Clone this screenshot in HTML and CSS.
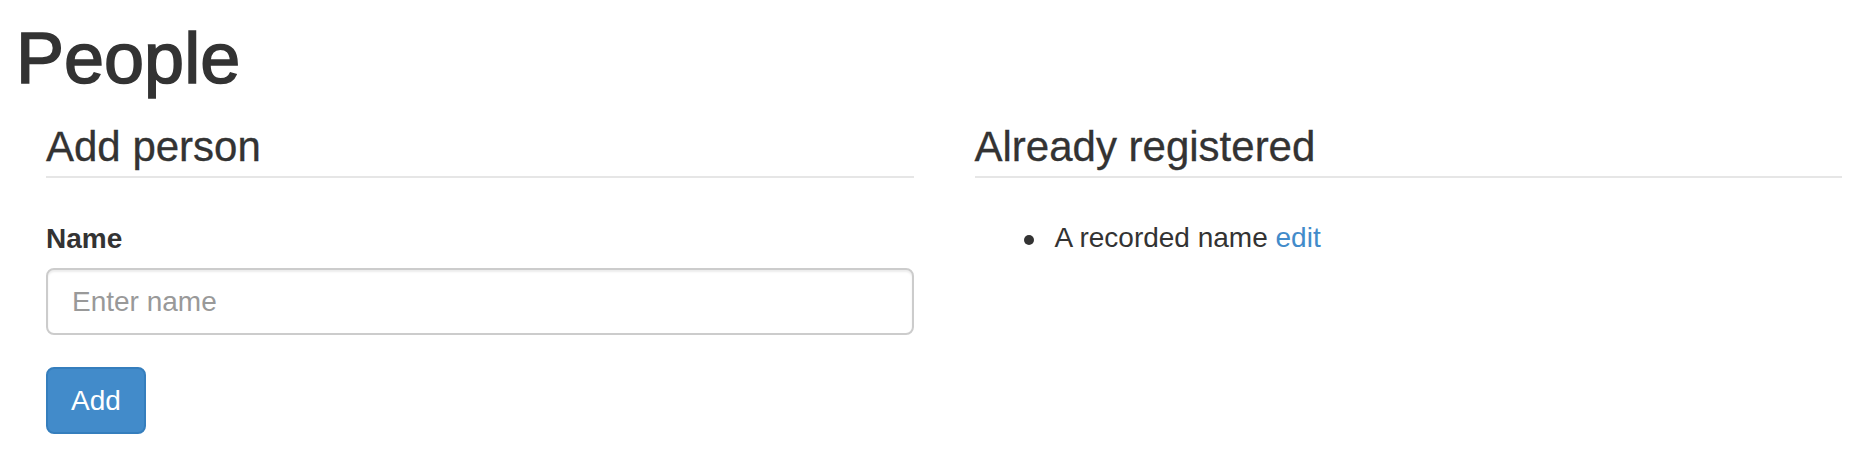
FILE: index.html
```html
<!DOCTYPE html>
<html lang="en">
<head>
<meta charset="utf-8">
<title>People</title>
<link rel="stylesheet" href="styles.css">
</head>
<body>
<div class="page">
  <h1 class="title">People</h1>
  <div class="row">
    <section class="col">
      <h3 class="section-header">Add person</h3>
      <form class="form">
        <div class="form-group">
          <label class="label" for="name">Name</label>
          <input class="input" id="name" type="text" placeholder="Enter name">
        </div>
        <button class="btn" type="button">Add</button>
      </form>
    </section>
    <section class="col">
      <h3 class="section-header">Already registered</h3>
      <ul class="list">
        <li class="list-item">A recorded name <a class="link" href="#">edit</a></li>
      </ul>
    </section>
  </div>
</div>
</body>
</html>
```
FILE: styles.css
```css
html, body {
  margin: 0;
  padding: 0;
  background: #ffffff;
}

body {
  font-family: "Liberation Sans", Arial, sans-serif;
  color: #333333;
  font-size: 28px;
  line-height: 40px;
}

.page {
  padding: 0 22px 0 16px;
}

.title {
  margin: 19px 0 0;
  font-size: 72px;
  line-height: 79px;
  font-weight: 500;
  color: #333333;
  -webkit-text-stroke: 1.6px #333333;
}

.row {
  display: grid;
  grid-template-columns: 1fr 1fr;
  column-gap: 61px;
  margin: 26px 0 0 30px;
}

.section-header {
  margin: 0;
  font-size: 42px;
  line-height: 46px;
  font-weight: 500;
  padding-bottom: 6px;
  border-bottom: 2px solid #e6e6e6;
  -webkit-text-stroke: 0.3px #333333;
}

.form {
  margin: 41px 0 0;
}

.form-group {
  margin-bottom: 32px;
}

.label {
  display: block;
  font-weight: bold;
  font-size: 28px;
  line-height: 40px;
  margin-bottom: 9px;
}

.input {
  display: block;
  box-sizing: border-box;
  width: 100%;
  height: 67px;
  padding: 0 24px;
  margin: 0;
  border: 2px solid #cccccc;
  border-radius: 8px;
  box-shadow: inset 0 2px 2px rgba(0, 0, 0, 0.075);
  font-family: "Liberation Sans", Arial, sans-serif;
  font-size: 28px;
  color: #555555;
  background: #ffffff;
  outline: none;
}

.input::placeholder {
  color: #999999;
}

.btn {
  display: inline-block;
  padding: 12px 23px;
  margin: 0;
  font-family: "Liberation Sans", Arial, sans-serif;
  font-size: 28px;
  line-height: 39px;
  color: #ffffff;
  background: #428bca;
  border: 2px solid #357ebd;
  border-radius: 8px;
  cursor: pointer;
}

.list {
  margin: 40px 0 0;
  padding-left: 80px;
  list-style: none;
}

.list-item {
  position: relative;
}

.list-item::before {
  content: "";
  position: absolute;
  left: -31px;
  top: 17px;
  width: 10px;
  height: 10px;
  border-radius: 50%;
  background: #333333;
}

.link {
  color: #428bca;
  text-decoration: none;
}
```
